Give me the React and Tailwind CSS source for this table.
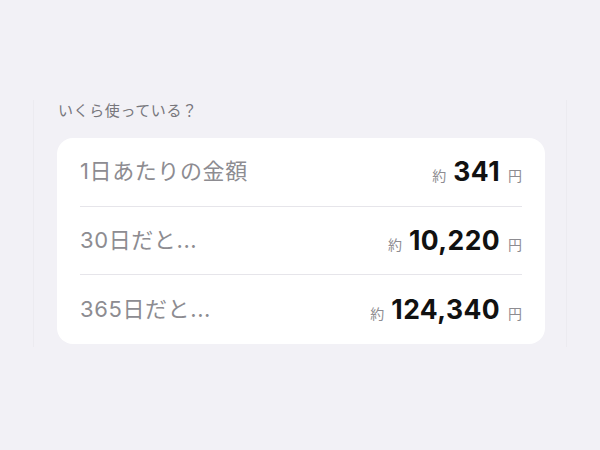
export default function App() {
  const rows = [
    { label: "1日あたりの金額", value: "341" },
    { label: "30日だと...", value: "10,220" },
    { label: "365日だと...", value: "124,340" },
  ];
  return (
    <div
      className="w-[600px] h-[450px] bg-[#f2f1f6] pt-[100px] overflow-hidden"
      style={{ fontFamily: 'Inter, "Noto Sans CJK JP", sans-serif' }}
    >
      <div className="mx-[33px] h-[247px] border-x border-[#ecebf0] pl-[23px] pr-[21px] pt-[1px]">
        <div className="pl-[1px] text-[15px] leading-[20px] text-[#77767c] tracking-[0.6px]">
          いくら使っている？
        </div>
        <div className="mt-[17px] bg-white rounded-[16px] pl-[23px] pr-[23px]">
          {rows.map((r, i) => (
            <div
              key={i}
              className={
                "h-[68.6px] flex items-center justify-between " +
                (i < rows.length - 1 ? "border-b border-[#e6e5ea]" : "")
              }
            >
              <div className="text-[22px] text-[#8d8c91] tracking-[0.6px]">{r.label}</div>
              <div className="flex items-baseline">
                <span className="text-[14px] text-[#8d8c91]">約</span>
                <span className="ml-[7px] text-[26.5px] font-bold text-[#111] tracking-[0.4px]">
                  {r.value}
                </span>
                <span className="ml-[8px] text-[14px] text-[#8d8c91]">円</span>
              </div>
            </div>
          ))}
        </div>
      </div>
    </div>
  );
}
